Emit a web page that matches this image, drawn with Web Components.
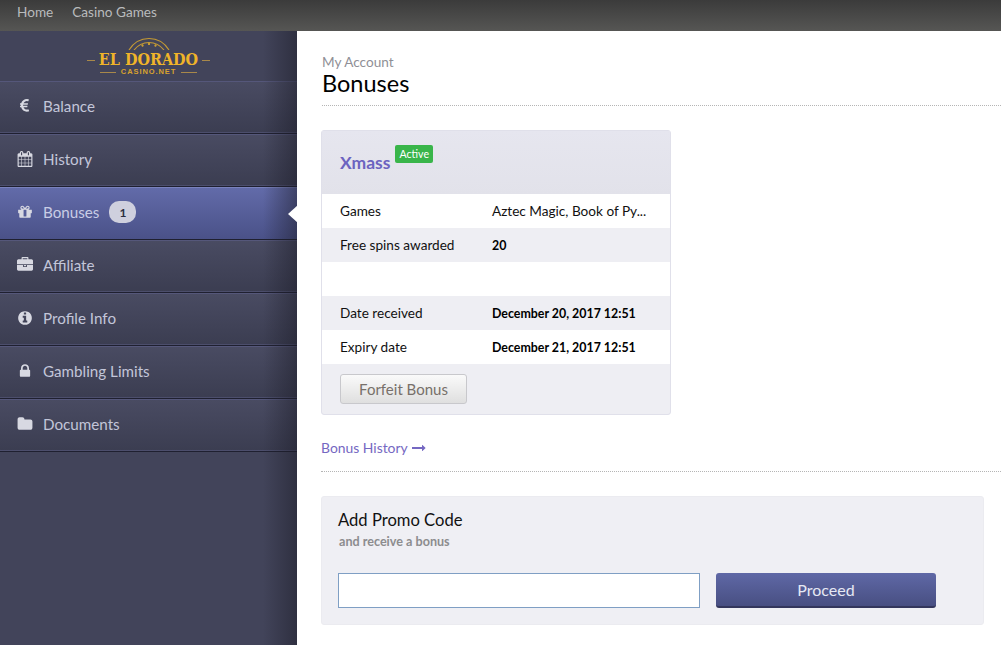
<!DOCTYPE html>
<html lang="en">
<head>
<meta charset="utf-8">
<title>Bonuses</title>
<style>
  html, body { margin: 0; height: 100%; overflow: hidden; background: #fff; }
  body { font-family: Lato, "Liberation Sans", sans-serif; }
</style>
</head>
<body>
<account-page>
  <top-bar slot="top">
    <a href="#none">Home</a>
    <a href="#none">Casino Games</a>
  </top-bar>

  <side-nav slot="side">
    <brand-logo></brand-logo>
    <nav-item icon="euro">Balance</nav-item>
    <nav-item icon="calendar">History</nav-item>
    <nav-item icon="gift" badge="1" active>Bonuses</nav-item>
    <nav-item icon="briefcase">Affiliate</nav-item>
    <nav-item icon="info">Profile Info</nav-item>
    <nav-item icon="lock">Gambling Limits</nav-item>
    <nav-item icon="folder">Documents</nav-item>
  </side-nav>

  <page-title crumb="My Account">Bonuses</page-title>

  <bonus-card name="Xmass" status="Active" action="Forfeit Bonus">
    <bonus-row label="Games" plain>Aztec Magic, Book of Py...</bonus-row>
    <bonus-row label="Free spins awarded" shade>20</bonus-row>
    <bonus-row></bonus-row>
    <bonus-row label="Date received" shade>December 20, 2017 12:51</bonus-row>
    <bonus-row label="Expiry date">December 21, 2017 12:51</bonus-row>
  </bonus-card>

  <history-link>Bonus History</history-link>

  <promo-form></promo-form>
</account-page>

<script>
// font awesome 4 글리프
const ICONS = {
  euro: ['0 0 1024 1792', 'M976 1300l35 159q3 12-3 22.5t-17 14.5l-5 1q-4 2-10.5 3.5t-16 4.5-21.5 5.5-25.5 5-30 5-33.5 4.5-36.5 3-38.5 1q-234 0-409-130.5t-238-351.5h-95q-13 0-22.5-9.5t-9.5-22.5v-113q0-13 9.5-22.5t22.5-9.5h66q-2-57 1-105h-67q-14 0-23-9t-9-23v-114q0-14 9-23t23-9h98q67-210 243.5-338t400.5-128q102 0 194 23 11 3 20 15 6 11 3 24l-43 159q-3 13-14 19.5t-24 2.5l-4-1q-4-1-11.5-2.5l-17.5-3.5-22.5-3.5-26-3-29-2.5-29.5-1q-126 0-226 64t-150 176h468q16 0 25 12 10 12 7 26l-24 114q-5 26-32 26h-488q-3 47 0 105h459q15 0 25 12 9 12 6 27l-24 112q-2 11-11 18.5t-20 7.5h-387q48 117 149.5 185.5t228.5 68.5q18 0 36-1.5t33.5-3.5 29.5-4.5 24.5-5 18.5-4.5l12-3 5-2q13-5 26 2 12 7 15 21z'],
  calendar: ['0 0 1792 1792', 'M192 1664h288v-288h-288v288zm352 0h320v-288h-320v288zm-352-352h288v-320h-288v320zm352 0h320v-320h-320v320zm-352-384h288v-288h-288v288zm736 736h320v-288h-320v288zm-384-736h320v-288h-320v288zm768 736h288v-288h-288v288zm-384-352h320v-320h-320v320zm-352-864v-288q0-13-9.5-22.5t-22.5-9.5h-64q-13 0-22.5 9.5t-9.5 22.5v288q0 13 9.5 22.5t22.5 9.5h64q13 0 22.5-9.5t9.5-22.5zm736 864h288v-320h-288v320zm-384-384h320v-288h-320v288zm384 0h288v-288h-288v288zm32-480v-288q0-13-9.5-22.5t-22.5-9.5h-64q-13 0-22.5 9.5t-9.5 22.5v288q0 13 9.5 22.5t22.5 9.5h64q13 0 22.5-9.5t9.5-22.5zm384-64v1280q0 52-38 90t-90 38h-1408q-52 0-90-38t-38-90v-1280q0-52 38-90t90-38h128v-96q0-66 47-113t113-47h64q66 0 113 47t47 113v96h384v-96q0-66 47-113t113-47h64q66 0 113 47t47 113v96h128q52 0 90 38t38 90z'],
  gift: ['0 0 1792 1792', 'M1056 1356v-716h-320v716q0 25 18 38.5t46 13.5h192q28 0 46-13.5t18-38.5zm-456-844h195l-126-161q-26-31-69-31-40 0-68 28t-28 68 28 68 68 28zm688-96q0-40-28-68t-68-28q-43 0-69 31l-125 161h194q40 0 68-28t28-68zm376 256v320q0 14-9 23t-23 9h-96v416q0 40-28 68t-68 28h-1088q-40 0-68-28t-28-68v-416h-96q-14 0-23-9t-9-23v-320q0-14 9-23t23-9h440q-93 0-158.5-65.5t-65.5-158.5 65.5-158.5 158.5-65.5q107 0 168 77l128 165 128-165q61-77 168-77 93 0 158.5 65.5t65.5 158.5-65.5 158.5-158.5 65.5h440q14 0 23 9t9 23z'],
  briefcase: ['0 0 1792 1792', 'M640 256h512v-128h-512v128zm1152 640v480q0 66-47 113t-113 47h-1472q-66 0-113-47t-47-113v-480h672v160q0 26 19 45t45 19h320q26 0 45-19t19-45v-160h672zm-768 0v128h-256v-128h256zm768-480v384h-1792v-384q0-66 47-113t113-47h352v-160q0-40 28-68t68-28h576q40 0 68 28t28 68v160h352q66 0 113 47t47 113z'],
  info: ['0 0 1792 1792', 'M1152 1376v-160q0-14-9-23t-23-9h-96v-512q0-14-9-23t-23-9h-320q-14 0-23 9t-9 23v160q0 14 9 23t23 9h96v320h-96q-14 0-23 9t-9 23v160q0 14 9 23t23 9h448q14 0 23-9t9-23zm-128-896v-160q0-14-9-23t-23-9h-192q-14 0-23 9t-9 23v160q0 14 9 23t23 9h192q14 0 23-9t9-23zm640 416q0 209-103 385.5t-279.5 279.5-385.5 103-385.5-103-279.5-279.5-103-385.5 103-385.5 279.5-279.5 385.5-103 385.5 103 279.5 279.5 103 385.5z'],
  lock: ['0 0 1792 1792', 'M640 768h512v-192q0-106-75-181t-181-75-181 75-75 181v192zm832 96v576q0 40-28 68t-68 28h-960q-40 0-68-28t-28-68v-576q0-40 28-68t68-28h32v-192q0-184 132-316t316-132 316 132 132 316v192h32q40 0 68 28t28 68z'],
  folder: ['0 0 1792 1792', 'M1728 608v704q0 92-66 158t-158 66h-1216q-92 0-158-66t-66-158v-960q0-92 66-158t158-66h320q92 0 158 66t66 158v32h672q92 0 158 66t66 158z'],
  arrow: ['0 0 1792 1792', 'M1728 893q0 14-10 24l-384 354q-16 14-35 6-19-9-19-29v-224h-1248q-14 0-23-9t-9-23v-192q0-14 9-23t23-9h1248v-224q0-21 19-29t35 5l384 350q10 10 10 23z']
};

function iconSvg(name, size) {
  const [box, d] = ICONS[name];
  const w = name === 'euro' ? size * 1024 / 1792 : size;
  return `<svg width="${w}" height="${size}" viewBox="${box}" fill="currentColor" aria-hidden="true"><path d="${d}"/></svg>`;
}

// shadow root 만들어 주는 공통 부모
class ShadowBase extends HTMLElement {
  constructor() {
    super();
    this.attachShadow({ mode: 'open' });
  }
  connectedCallback() {
    this.shadowRoot.innerHTML = this.render();
  }
}

class AccountPage extends ShadowBase {
  render() {
    return `
      <style>
        :host { display: grid; grid-template: 31px 614px / 297px 704px; width: 1001px; height: 645px; overflow: hidden; }
        .top { grid-column: 1 / 3; }
        main { padding: 23px 0 0 24px; min-width: 0; }
      </style>
      <div class="top"><slot name="top"></slot></div>
      <slot name="side"></slot>
      <main><slot></slot></main>
    `;
  }
}

class TopBar extends ShadowBase {
  render() {
    return `
      <style>
        :host { display: flex; gap: 19px; height: 31px; padding-left: 17px; box-sizing: border-box; background: linear-gradient(#3b3b3b, #565654); }
        ::slotted(a) { color: #b9bbbd; font-size: 13.6px; line-height: 24px; text-decoration: none; }
      </style>
      <slot></slot>
    `;
  }
}

class SideNav extends ShadowBase {
  render() {
    return `
      <style>
        :host { display: block; position: relative; background: #42445a; }
        .edge { position: absolute; top: 0; right: 0; bottom: 0; width: 34px; pointer-events: none; z-index: 2;
                background: linear-gradient(90deg, rgba(28,28,40,0), rgba(28,28,40,.5)); }
      </style>
      <slot></slot>
      <div class="edge"></div>
    `;
  }
}

class BrandLogo extends ShadowBase {
  render() {
    return `
      <style>
        :host { display: flex; flex-direction: column; align-items: center; height: 50px; box-sizing: border-box; padding-top: 6px; }
        svg { display: block; }
        .name { display: flex; align-items: center; gap: 4px; height: 16px; margin-top: 2px; color: #f0b429; font: bold 16px/16px "DejaVu Serif Condensed", "DejaVu Serif", serif; }
        .name i { width: 8px; height: 1px; background: #a8884a; }
        .sub { display: flex; align-items: center; gap: 5px; height: 10px; margin-top: -1px; color: #d9a22e; font: bold 7.5px/10px "Liberation Sans", sans-serif; letter-spacing: .9px; }
        .sub i { width: 16px; height: 1px; background: #a8884a; }
      </style>
      <svg width="42" height="13" viewBox="0 0 42 13" fill="none" stroke="#c49a34">
        <path d="M1 13C6 5 13 1.500 21 1.500S36 5 41 13" stroke-width="1.200"/>
        <path d="M6 13C10 8 15 5.500 21 5.500S32 8 36 13" stroke-width="1.200"/>
        <path d="M14 7.500l1 2M21 5.500v2.500M28 7.500l-1 2" stroke-width="2"/>
      </svg>
      <div class="name"><i></i><span>EL DORADO</span><i></i></div>
      <div class="sub"><i></i><span>CASINO.NET</span><i></i></div>
    `;
  }
}

class NavItem extends ShadowBase {
  render() {
    const active = this.hasAttribute('active');
    const badge = this.getAttribute('badge');
    return `
      <style>
        :host { display: flex; align-items: center; position: relative; height: 53px; box-sizing: border-box; padding-bottom: 3px;
                border-top: 1px solid #55577a; border-bottom: 1px solid #1f2030; box-shadow: inset 0 -1px 0 #4c4e6c;
                background: linear-gradient(#494b62, #3b3d51); color: #c3c6d9; font-size: 15.2px; }
        :host([active]) { border-top-color: #7a82bd; box-shadow: none; background: linear-gradient(#626ba9, #4a5188); color: #c9cde6; }
        .icon { display: flex; justify-content: center; align-items: center; width: 43px; padding: 0 10px 0 17px; box-sizing: border-box; color: #d8d9e2; }
        .badge { margin-left: 10px; width: 27px; height: 22px; border-radius: 10px; background: #cfd0de; color: #2c2e40; font-size: 12px; font-weight: bold; line-height: 23px; text-align: center; }
        .pointer { position: absolute; z-index: 3; right: -1px; top: 17px; width: 10px; height: 18px; background: #fff; clip-path: polygon(0 50%, 100% 0, 100% 100%); }
      </style>
      <span class="icon">${iconSvg(this.getAttribute('icon'), 16)}</span>
      <slot></slot>
      ${badge ? `<span class="badge">${badge}</span>` : ''}
      ${active ? '<span class="pointer"></span>' : ''}
    `;
  }
}

class PageTitle extends ShadowBase {
  render() {
    return `
      <style>
        :host { display: block; height: 52px; margin-left: 1px; box-sizing: border-box; border-bottom: 1px dotted #b5b5b5; }
        .crumb { color: #8f8f96; font-size: 13.6px; line-height: 16px; }
        h1 { margin: 0; color: #000; font-size: 23.5px; font-weight: 400; line-height: 26px; }
      </style>
      <div class="crumb">${this.getAttribute('crumb')}</div>
      <h1><slot></slot></h1>
    `;
  }
}

class BonusCard extends ShadowBase {
  render() {
    return `
      <style>
        :host { display: block; width: 350px; margin-top: 24px; box-sizing: border-box; border: 1px solid #e0e0ea; border-radius: 3px; background: #eeeef3; }
        header { display: flex; align-items: flex-start; height: 63px; box-sizing: border-box; padding: 14px 0 0 18px; background: linear-gradient(#e6e6ef, #e2e2ea); }
        .name { margin-top: 7px; color: #6c63c0; font-size: 17.5px; font-weight: bold; line-height: 22px; }
        .status { margin-left: 5px; padding: 0 4px; height: 18px; border-radius: 2px; background: #39b54a; color: #fff; font-size: 10.6px; line-height: 18px; }
        footer { height: 50px; box-sizing: border-box; padding: 10px 18px; }
        button { display: block; width: 127px; height: 30px; padding: 0; border: 1px solid #c8c8cc; border-radius: 3px; background: linear-gradient(#fafafa, #dfdfdf); color: #77706a; font: 15px Lato, "Liberation Sans", sans-serif; }
      </style>
      <header>
        <span class="name">${this.getAttribute('name')}</span>
        <span class="status">${this.getAttribute('status')}</span>
      </header>
      <slot></slot>
      <footer><button type="button">${this.getAttribute('action')}</button></footer>
    `;
  }
}

class BonusRow extends ShadowBase {
  render() {
    return `
      <style>
        :host { display: grid; grid-template-columns: 152px 1fr; align-items: center; height: 34px; padding-left: 18px; background: #fff; color: #111; font-size: 13.6px; }
        :host([shade]) { background: #eeeef3; }
        .value { font-size: 12.4px; font-weight: bold; color: #000; }
        :host([plain]) .value { font-size: 13.6px; font-weight: 400; color: #111; }
      </style>
      <span>${this.getAttribute('label') || ''}</span>
      <span class="value"><slot></slot></span>
    `;
  }
}

class HistoryLink extends ShadowBase {
  render() {
    return `
      <style>
        :host { display: flex; align-items: center; gap: 4px; height: 57px; box-sizing: border-box; padding-top: 9px; border-bottom: 1px dotted #b5b5b5; color: #7568c2; font-size: 13.9px; }
      </style>
      <slot></slot>${iconSvg('arrow', 14)}
    `;
  }
}

class PromoForm extends ShadowBase {
  render() {
    return `
      <style>
        :host { display: block; width: 663px; height: 129px; margin-top: 24px; box-sizing: border-box; padding: 13px 16px 0; border: 1px solid #ebebf0; border-radius: 3px; background: #efeff4; }
        h2 { margin: 0; color: #111; font-size: 16.6px; font-weight: 400; line-height: 20px; }
        p { margin: 4px 0 0 1px; color: #8c8c8e; font-size: 12.6px; font-weight: bold; line-height: 16px; }
        .row { display: flex; gap: 16px; margin-top: 23px; }
        input { width: 362px; height: 35px; padding: 0 8px; box-sizing: border-box; border: 1px solid #7f9fc4; background: #fff; }
        button { width: 220px; height: 35px; padding: 0; border: 0; border-bottom: 2px solid #33365c; border-radius: 3px; background: linear-gradient(#5f68a6, #484f82); color: #e6e8f4; font: 16px Lato, "Liberation Sans", sans-serif; }
      </style>
      <h2>Add Promo Code</h2>
      <p>and receive a bonus</p>
      <div class="row"><input type="text"><button type="button">Proceed</button></div>
    `;
  }
}

// 자식보다 부모를 먼저 정의
customElements.define('account-page', AccountPage);
customElements.define('top-bar', TopBar);
customElements.define('side-nav', SideNav);
customElements.define('brand-logo', BrandLogo);
customElements.define('nav-item', NavItem);
customElements.define('page-title', PageTitle);
customElements.define('bonus-card', BonusCard);
customElements.define('bonus-row', BonusRow);
customElements.define('history-link', HistoryLink);
customElements.define('promo-form', PromoForm);
</script>
</body>
</html>
